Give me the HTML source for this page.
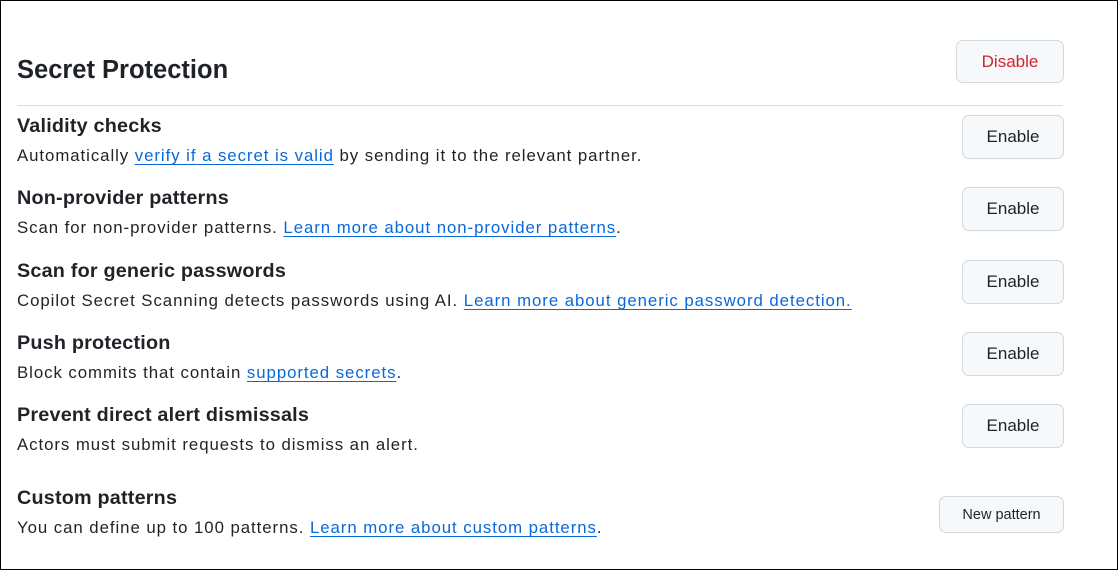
<!DOCTYPE html>
<html><head><style>
html,body{margin:0;padding:0}
body{width:1118px;height:570px;box-sizing:border-box;border:1px solid #000;background:#fff;font-family:"Liberation Sans",sans-serif;color:#1f2328;position:relative;overflow:hidden}
h1{position:absolute;left:16px;top:52px;margin:0;font-size:25.5px;font-weight:600;line-height:34px}
.hr{position:absolute;left:16px;top:104px;width:1046px;height:1px;background:#d8dee4}
.t{position:absolute;left:16px;font-size:19.8px;font-weight:600;line-height:26px;letter-spacing:0.2px}
.d{position:absolute;left:16px;font-size:16.8px;line-height:22px;letter-spacing:0.95px}
a{color:#0969da;text-decoration:underline;text-underline-offset:3px}
.btn{position:absolute;box-sizing:border-box;border:1px solid #d1d9e0;border-radius:7px;background:#f6f8fa;font-size:17px;display:flex;align-items:center;justify-content:center;color:#1f2328}
</style></head><body>
<h1>Secret Protection</h1>
<div class="btn" style="left:955px;top:39px;width:108px;height:43px;color:#d1242f">Disable</div>
<div class="hr"></div>

<div class="t" style="top:112px">Validity checks</div>
<div class="d" style="top:144px">Automatically <a>verify if a secret is valid</a> by sending it to the relevant partner.</div>
<div class="btn" style="left:961px;top:114px;width:102px;height:44px">Enable</div>

<div class="t" style="top:184px">Non-provider patterns</div>
<div class="d" style="top:216px">Scan for non-provider patterns. <a>Learn more about non-provider patterns</a>.</div>
<div class="btn" style="left:961px;top:186px;width:102px;height:44px">Enable</div>

<div class="t" style="top:257px">Scan for generic passwords</div>
<div class="d" style="top:289px">Copilot Secret Scanning detects passwords using AI. <a>Learn more about generic password detection.</a></div>
<div class="btn" style="left:961px;top:259px;width:102px;height:44px">Enable</div>

<div class="t" style="top:329px">Push protection</div>
<div class="d" style="top:361px">Block commits that contain <a>supported secrets</a>.</div>
<div class="btn" style="left:961px;top:331px;width:102px;height:44px">Enable</div>

<div class="t" style="top:401px">Prevent direct alert dismissals</div>
<div class="d" style="top:433px">Actors must submit requests to dismiss an alert.</div>
<div class="btn" style="left:961px;top:403px;width:102px;height:44px">Enable</div>

<div class="t" style="top:484px">Custom patterns</div>
<div class="d" style="top:516px">You can define up to 100 patterns. <a>Learn more about custom patterns</a>.</div>
<div class="btn" style="left:938px;top:495px;width:125px;height:37px;font-size:14.5px">New pattern</div>
</body></html>
